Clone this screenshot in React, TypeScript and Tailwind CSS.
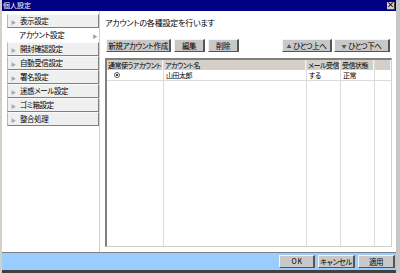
import React from 'react';

const font = { fontFamily: '"Noto Sans CJK JP", "Noto Sans", sans-serif' };

const menu = ['表示設定', 'アカウント設定', '開封確認設定', '自動受信設定', '署名設定', '迷惑メール設定', 'ゴミ箱設定', '整合処理'];

const Btn: React.FC<{ label: React.ReactNode; className?: string }> = ({ label, className = '' }) => (
  <button
    className={`h-[13px] flex items-center justify-center bg-[#c8c8c8] border-t border-l border-t-[#f4f4f4] border-l-[#f4f4f4] border-r-2 border-b border-r-[#555] border-b-[#555] text-[7.5px] tracking-[-0.4px] leading-none text-black whitespace-nowrap ${className}`}
  >
    {label}
  </button>
);

export default function App() {
  return (
    <div
      className="w-[400px] h-[273px] flex flex-col bg-white border-l-2 border-r-4 border-l-[#d4d0c8] border-r-[#c8c8c8] overflow-hidden [font-feature-settings:'palt']"
      style={font}
    >
      {/* title bar */}
      <div className="h-[11px] bg-[#000080] flex items-center justify-between pl-[1px] pr-[1px]">
        <span className="text-white text-[7px] leading-none">個人設定</span>
        <span className="w-[8px] h-[8px] bg-[#d4d0c8] border-r border-b border-r-[#404040] border-b-[#404040] flex items-center justify-center text-[8px] leading-none font-bold text-black">
          ×
        </span>
      </div>

      <div className="flex flex-1 min-h-0">
        {/* sidebar */}
        <div className="w-[98px] border-r border-r-[#d0d0d0] pt-[3px] pl-[5px] text-[7.5px] tracking-[-0.4px]">
          {menu.map((m, i) =>
            i === 1 ? (
              <div key={m} className="h-[14px] flex items-center pl-[12px] pr-[2px] leading-none text-black">
                <span className="flex-1">{m}</span>
                <span className="text-[5px] text-[#a0a0a0]">▶</span>
              </div>
            ) : (
              <div
                key={m}
                className="h-[14px] flex items-center bg-[#efefef] border border-t-[#fafafa] border-l-[#b8b8b8] border-r-[#808080] border-b-[#808080] leading-none text-black"
              >
                <span className="w-[12px] pl-[3px] text-[5px] text-[#a8a8a8]">▶</span>
                <span>{m}</span>
              </div>
            )
          )}
        </div>

        {/* content */}
        <div className="flex-1 pl-[5px] pr-[4px] pt-[6px] flex flex-col pb-[5px]">
          <div className="text-[8px] tracking-[-0.2px] leading-[11px] text-black">アカウントの各種設定を行います</div>

          <div className="flex items-center mt-[11px] pl-[1px]">
            <Btn label="新規アカウント作成" className="w-[65px]" />
            <Btn label="編集" className="w-[31px] ml-[3px]" />
            <Btn label="削除" className="w-[31px] ml-[3px]" />
            <div className="flex-1" />
            <Btn
              label={<><span className="text-[5px] text-[#555] mr-[2px]">▲</span>ひとつ上へ</>}
              className="w-[50px] text-[#333]"
            />
            <Btn
              label={<><span className="text-[5px] text-[#555] mr-[2px]">▼</span>ひとつ下へ</>}
              className="w-[56px] ml-[2px] mr-[2px] text-[#333]"
            />
          </div>

          <div className="mt-[6px] flex-1 border-t-2 border-l-2 border-t-[#808080] border-l-[#808080] border-r border-b border-r-[#d4d0c8] border-b-[#d4d0c8] flex text-[7px] tracking-[-0.5px] leading-none text-black">
            {[
              { w: 'w-[57px]', h: '通常使うアカウント', v: 'radio' },
              { w: 'w-[143px]', h: 'アカウント名', v: '山田太郎' },
              { w: 'w-[34px]', h: 'メール受信', v: 'する' },
              { w: 'w-[34px]', h: '受信状態', v: '正常' },
              { w: 'flex-1', h: '', v: '' },
            ].map((c, i) => (
              <div key={i} className={`${c.w} flex flex-col border-r border-r-[#dcdcdc] last:border-r-0`}>
                <div className="h-[10px] bg-[#d4d0c8] border-r border-r-[#f4f4f4] flex items-center pl-[1px] whitespace-nowrap">
                  {c.h}
                </div>
                <div className="h-[11px] border-b border-b-[#dcdcdc] flex items-center pl-[2px]">
                  {c.v === 'radio' ? (
                    <span className="ml-[5px] w-[6px] h-[6px] rounded-full border border-[#606060] bg-white flex items-center justify-center">
                      <span className="w-[2px] h-[2px] rounded-full bg-black" />
                    </span>
                  ) : (
                    c.v
                  )}
                </div>
              </div>
            ))}
          </div>
        </div>
      </div>

      {/* footer */}
      <div className="h-[21px] bg-[#99ccff] border-t border-t-[#808080] border-b-[3px] border-b-[#404040] flex items-center justify-end gap-[3px] pr-[1px]">
        <Btn label="O K" className="w-[36px] text-[7px]" />
        <Btn label="キャンセル" className="w-[37px]" />
        <Btn label="適用" className="w-[37px]" />
      </div>
    </div>
  );
}
